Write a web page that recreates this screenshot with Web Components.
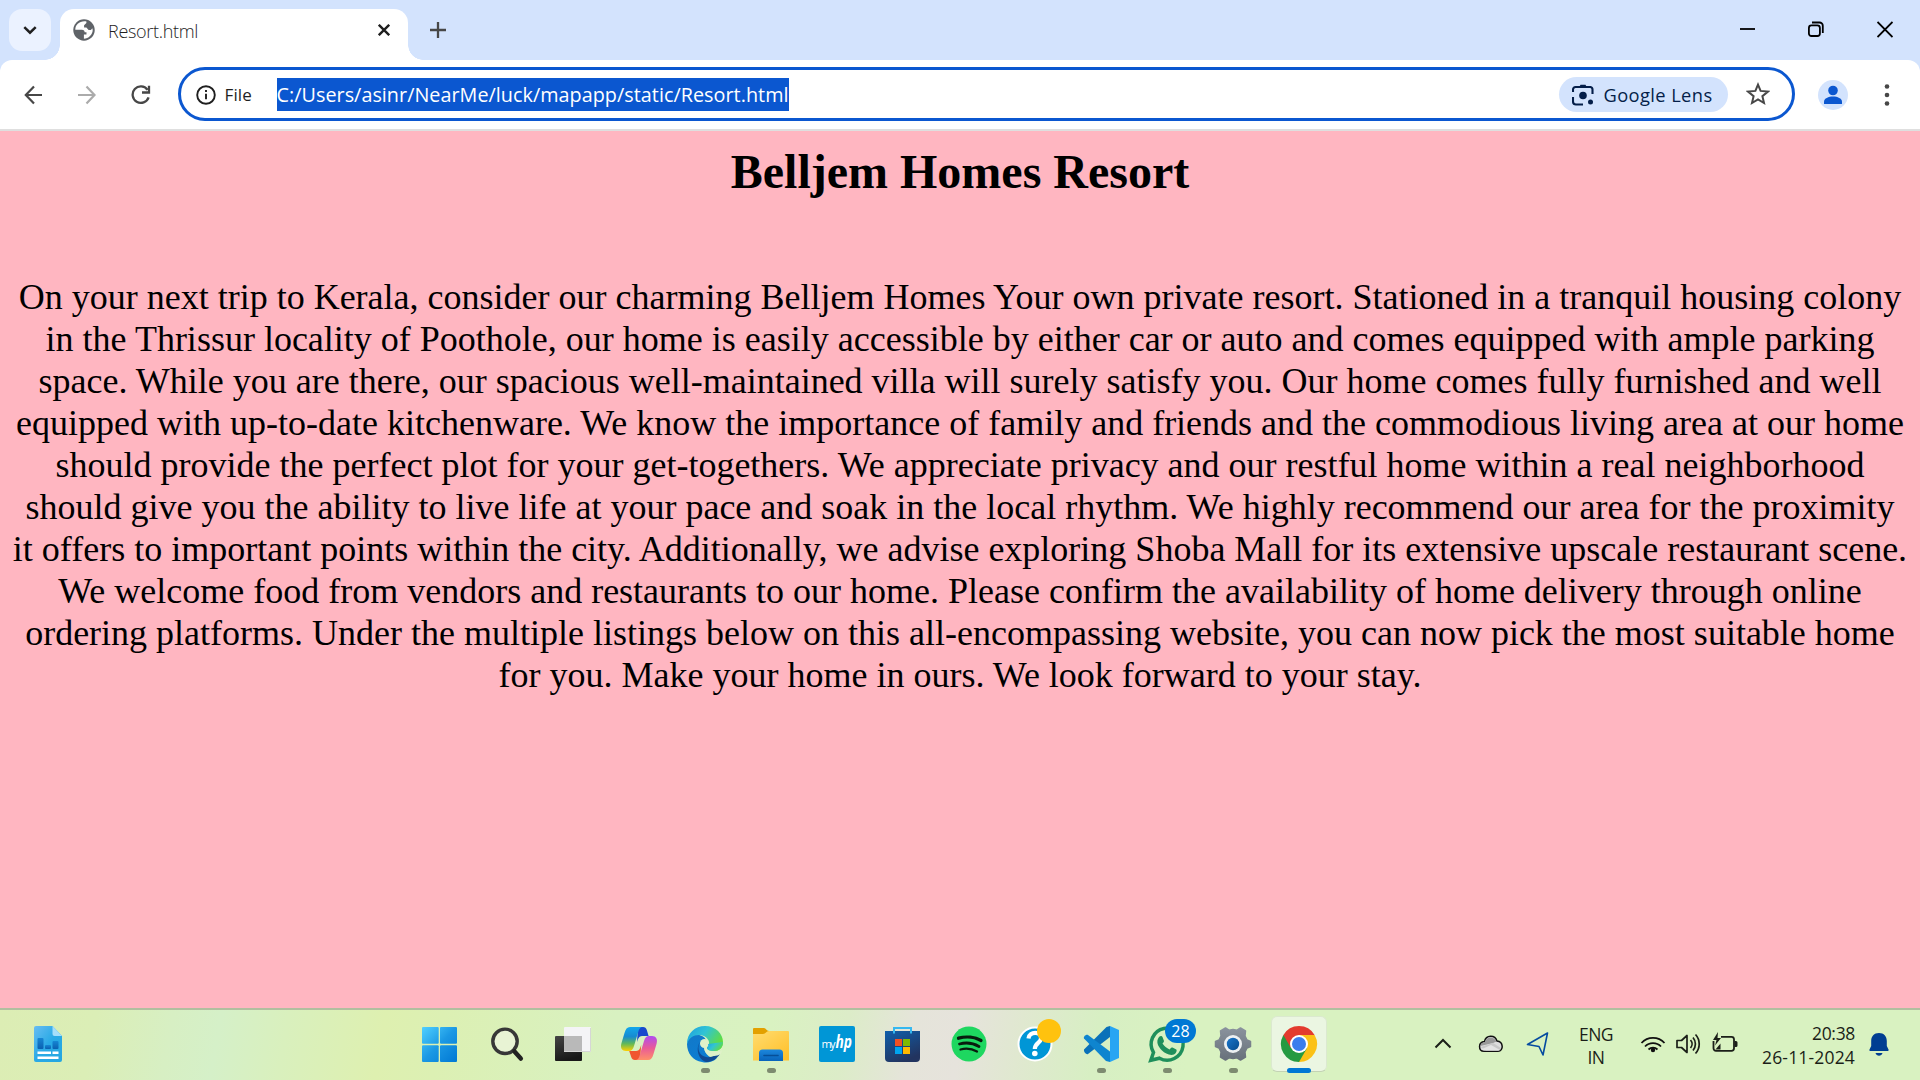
<!DOCTYPE html>
<html lang="en">
<head>
<meta charset="utf-8">
<title>Resort.html</title>
<style>
html,body{margin:0;height:100%;overflow:hidden}
body{font-family:"Open Sans","Noto Sans",sans-serif;color:#1f1f1f}
</style>
</head>
<body>
<desktop-shell></desktop-shell>
<script>
const define = (name, html, setup) => {
  const t = document.createElement('template');
  t.innerHTML = html;
  customElements.define(name, class extends HTMLElement {
    constructor() {
      super();
      this.attachShadow({mode: 'open'}).appendChild(t.content.cloneNode(true));
    }
    connectedCallback() { if (setup) setup(this); }
  });
};

/* Single-line label whose tracking is adjusted to fill the width in its "w" attribute */
define('fit-text', `<style>:host{display:block;white-space:nowrap}span{display:inline-block}</style><span><slot></slot></span>`, el => {
  const w = parseFloat(el.getAttribute('w'));
  const s = el.shadowRoot.querySelector('span');
  el.style.width = w + 'px';
  s.style.letterSpacing = '0px';
  const d = (w - s.getBoundingClientRect().width) / el.textContent.length;
  s.style.letterSpacing = d.toFixed(4) + 'px';
});

define('tab-strip', `<style>
:host{display:flex;height:60px;background:#d3e3fd;box-sizing:border-box;padding:9px 0 0 9px}
.search{width:42px;height:42px;border-radius:13px;background:#ebf2ff}
.foot{width:15px;height:15px;align-self:flex-end}
.l{margin-left:-6px;background:radial-gradient(circle at 0 0,#0000 14.5px,#fff 15px)}
.r{background:radial-gradient(circle at 100% 0,#0000 14.5px,#fff 15px)}
.tab{width:348px;height:51px;border-radius:14px 14px 0 0;background:#fff;display:flex}
.fav{margin:10px 0 0 13px}
fit-text{font-size:18px;font-weight:300;line-height:24px;margin:10px 0 0 13px}
svg{display:block;flex:none}
.win{margin:10px 27px 0 auto;display:flex;gap:53px}
</style>
<div class="search"><svg width="42" height="42" fill="none" stroke="#1f1f1f" stroke-width="2.5"><path d="M15.3 18.2 21 23.7l5.7-5.5"/></svg></div>
<div class="foot l"></div>
<div class="tab">
 <svg class="fav" width="22" height="22" viewBox="0 0 24 24"><path fill="#5f6368" d="M12 .3A11.7 11.7 0 1 0 12 23.7 11.7 11.7 0 0 0 12 .3z"/><path fill="#fff" d="M2.5 11.7h7.1c2.3.2 3.1 1.3 3.1 2.8h2v2.5h-2.8v4.5c5-.1 9.6-4.400 9.600-9.500l-.4-1.800-1.600 1.700h-2.500l-2.400-2.700h-2.500V6.800l2.500-2.500V2.600C7.500 1.600 2.500 5.800 2.500 11.700z"/></svg>
 <fit-text w="90">Resort.html</fit-text>
 <svg style="margin:15px 18px 0 auto" width="12" height="12" stroke="#1f1f1f" stroke-width="2.4"><path d="M.8.8 11.200 11.200M11.200.8.8 11.200"/></svg>
</div>
<div class="foot r"></div>
<svg style="margin:13px 0 0 7px" width="16" height="16" stroke="#474747" stroke-width="2.3"><path d="M8 0v16M0 8h16"/></svg>
<div class="win">
<svg width="15" height="22" stroke="#000" stroke-width="1.800"><path d="M0 10h15"/></svg>
<svg width="16" height="22" fill="none" stroke="#000" stroke-width="1.800"><rect x=".9" y="6.400" width="11" height="10.600" rx="2.500"/><path d="M4 3.500h7.500a3.300 3.300 0 0 1 3.300 3.300V14"/></svg>
<svg width="16" height="22" stroke="#000" stroke-width="1.800"><path d="M.5 3 15.500 18M15.500 3 .5 18"/></svg>
</div>`);

define('tool-bar', `<style>
:host{display:block;background:#d3e3fd}
.bar{height:69px;background:#fff;border-radius:12px 12px 0 0;border-bottom:2px solid #dfdfdf;display:flex;align-items:center;box-sizing:content-box}
svg{display:block;flex:none}
.omni{box-sizing:border-box;width:1617px;height:54px;border:3px solid #0b57d0;border-radius:27px;margin:0 0 1px 27px;display:flex;align-items:center;padding-left:14.500px}
.omni svg{margin-top:1px}
.file{font-size:17px;font-weight:500;margin-left:9px}
.sel{background:#0b57d0;color:#fff;height:33px;margin:1px 0 0 24.500px;font-size:19.800px;line-height:33px}
.chip{width:169px;height:35px;border-radius:18px;background:#d3e3fd;color:#041e49;margin:1px 0 0 auto;display:flex;align-items:center;box-sizing:border-box;padding-left:13px}
.chip fit-text{font-size:18.300px;margin-left:10px;font-weight:500;line-height:34px}
</style>
<div class="bar">
<svg style="margin-left:24px" width="20" height="20" fill="none" stroke="#474747" stroke-width="2.200"><path d="M18 10H2.500M10 1.500 1.800 10 10 18.500"/></svg>
<svg style="margin-left:33px" width="20" height="20" fill="none" stroke="#ababab" stroke-width="2.200"><path d="M1 10h15.500M9.500 1.500l8 8.500-8 8.500"/></svg>
<svg style="margin-left:34px" width="20" height="20" fill="none" stroke="#474747" stroke-width="2.300"><path d="M17.600 12.300A8.200 8.200 0 1 1 16.500 4.800M18 .7V7.500H11"/></svg>
<div class="omni">
<svg width="20" height="20" fill="none" stroke="#1f1f1f" stroke-width="1.900"><circle cx="10" cy="10" r="8.800"/><path d="M10 8.800v5.500M10 5v2"/></svg>
<fit-text class="file" w="27.500">File</fit-text>
<fit-text class="sel" w="512">C:/Users/asinr/NearMe/luck/mapapp/static/Resort.html</fit-text>
<div class="chip"><svg width="22" height="22" fill="none" stroke="#041e49" stroke-width="2.100"><path d="M1 8V5.500A2.500 2.500 0 0 1 3.500 3h15A2.500 2.500 0 0 1 20.500 5.500V10M1 13v4.500A3 3 0 0 0 4 20.500h7"/><path d="M7.500 2.500 8.500 0.800h5l1 1.700z" fill="#041e49" stroke="none"/><circle cx="11" cy="11.500" r="3.800" fill="#041e49" stroke="none"/><circle cx="18.500" cy="18" r="2.500" fill="#041e49" stroke="none"/></svg><fit-text w="109">Google Lens</fit-text></div>
<svg style="margin:0 22.500px 0 18px" width="24" height="24" viewBox="0 0 24 24" fill="none" stroke="#474747" stroke-width="2"><path d="M12 2.700 14.600 8.900 22 9.600 16.400 14.200 18 21 12 17.300 6 21 7.600 14.200 2 9.600 9.400 8.900z"/></svg>
</div>
<svg style="margin-left:23px" width="30" height="30"><circle cx="15" cy="15" r="15" fill="#d3e3fd"/><g fill="#0b57d0"><circle cx="15" cy="10.500" r="4.800"/><path d="M6 24v-2.500c0-3 4.500-5 9-5s9 2 9 5V24z"/></g></svg>
<svg style="margin-left:36px" width="6" height="24" fill="#474747"><circle cx="3" cy="3.500" r="2.300"/><circle cx="3" cy="12" r="2.300"/><circle cx="3" cy="20.500" r="2.300"/></svg>
</div>`);

define('resort-page', `<style>
:host{display:block;background:#ffb6c1;overflow:hidden;color:#000;font-family:"Liberation Serif",serif;text-align:center}
h1{font-size:48px;line-height:56px;margin:13px 0 0}
p{font-size:36px;line-height:42px;margin:76px 12px 0}
</style>
<h1>Belljem Homes Resort</h1>
<p>On your next trip to Kerala, consider our charming Belljem Homes Your own private resort. Stationed in a tranquil housing colony in the Thrissur locality of Poothole, our home is easily accessible by either car or auto and comes equipped with ample parking space. While you are there, our spacious well-maintained villa will surely satisfy you. Our home comes fully furnished and well equipped with up-to-date kitchenware. We know the importance of family and friends and the commodious living area at our home should provide the perfect plot for your get-togethers. We appreciate privacy and our restful home within a real neighborhood should give you the ability to live life at your pace and soak in the local rhythm. We highly recommend our area for the proximity it offers to important points within the city. Additionally, we advise exploring Shoba Mall for its extensive upscale restaurant scene. We welcome food from vendors and restaurants to our home. Please confirm the availability of home delivery through online ordering platforms. Under the multiple listings below on this all-encompassing website, you can now pick the most suitable home for you. Make your home in ours. We look forward to your stay.</p>`);

/* One taskbar slot: slotted icon, running marker, optional badge */
define('task-item', `<style>
:host{display:block;position:relative;width:66px;height:70px;flex:none}
::slotted(svg){display:block;position:relative}
.bg{display:none;position:absolute;left:7px;top:6px;width:54px;height:54px;border:1px solid #dbe9cf;border-bottom-color:#c3d3b4;border-radius:6px;background:#ebf6e2}
.mark{display:none;position:absolute;left:31px;top:58px;width:9px;height:5px;border-radius:3px;background:#7d8b70}
:host([running]) .mark{display:block}
:host([active]) .mark{display:block;left:23px;width:24px;background:#0078d4}
:host([active]) .bg{display:block}
::slotted(.badge){position:absolute;left:33px;top:9px;width:31px;height:24px;border-radius:12px;background:#0078d4;color:#fff;font-size:16px;line-height:24px;text-align:center}
</style><div class="bg"></div><slot></slot><div class="mark"></div>`);

define('task-bar', `<style>
:host{display:flex;box-sizing:border-box;height:72px;border-top:2px solid #b1bf9f;
background:linear-gradient(100deg,#dcedb4 0,#dbeeb6 5%,#d7efc3 9%,#d5f0c8 11.500%,#d9f0bd 15%,#def0b0 20%,#dcf0b3 23%,#d8f1c1 32%,#d9f2c1 40%,#dcecc8 44%,#e5e4da 47.500%,#e6e3dc 50%,#e0e8d0 53%,#d7efc3 57%,#d9f2c1 62%,#d9f2c1 100%)}
svg{display:block;flex:none}
.start{display:flex;margin-left:340px}
.tray{display:flex;align-items:center;margin-left:104px;color:#1b1f18}
.txt{font-size:17.500px;line-height:23px;display:flex;flex-direction:column;font-weight:400;padding-top:1px}
</style>
<svg style="margin-left:34px" width="32" height="70"><defs><linearGradient id="dg" x2="1" y2="1"><stop stop-color="#68bdf3"/><stop offset=".5" stop-color="#2aaae6"/><stop offset="1" stop-color="#24a6e0"/></linearGradient><linearGradient id="db" x2="0" y2="1"><stop stop-color="#1686d4"/><stop offset="1" stop-color="#0b60b0"/></linearGradient></defs><path fill="url(#dg)" d="M2 16h16.500L28 26v24a2 2 0 0 1-2 2H2a2 2 0 0 1-2-2V18a2 2 0 0 1 2-2z"/><path fill="#a5defa" d="M18.500 16 28 26h-7.500a2 2 0 0 1-2-2z"/><g fill="url(#db)"><rect x="3.500" y="28" width="6" height="11" rx="1"/><rect x="11" y="35" width="6" height="4" rx="1"/><rect x="18.500" y="31" width="6" height="8" rx="1"/></g><path stroke="#fff" stroke-width="2.500" d="M3.500 42.800H17M18.500 42.800h6M3.500 47.800h21"/></svg>
<div class="start">
<task-item><svg width="66" height="70"><defs><linearGradient id="w" gradientUnits="userSpaceOnUse" x1="16" y1="17" x2="51" y2="52"><stop stop-color="#50d0ff"/><stop offset=".5" stop-color="#1b98e4"/><stop offset="1" stop-color="#0078d4"/></linearGradient></defs><g fill="url(#w)"><rect x="16" y="17" width="16.700" height="16.700" rx="1"/><rect x="34" y="17" width="17" height="16.700" rx="1"/><rect x="16" y="35.300" width="16.700" height="16.700" rx="1"/><rect x="34" y="35.300" width="17" height="16.700" rx="1"/></g></svg></task-item>
<task-item><svg width="66" height="70"><circle cx="33" cy="31.300" r="12.200" fill="#e8f3d4" stroke="#373737" stroke-width="3.400"/><path stroke="#222" stroke-width="4.500" stroke-linecap="round" d="M42.500 41.500 48.800 48.500"/></svg></task-item>
<task-item><svg width="66" height="70"><defs><linearGradient id="tv" x2=".3" y2="1"><stop stop-color="#454545"/><stop offset="1" stop-color="#181818"/></linearGradient></defs><rect x="17" y="26" width="27" height="25" rx="1" fill="url(#tv)"/><rect x="26" y="17" width="27" height="25" rx="1" fill="#f4f4f6"/><path fill="#b9b9b9" d="M26 26h18v16H26z"/><path d="M26 41.500h26.500V18" fill="none" stroke="#d6d6d6"/></svg></task-item>
<task-item><svg width="66" height="70"><defs><linearGradient id="c1" x2="0" y2="1"><stop stop-color="#12a7ec"/><stop offset=".4" stop-color="#168bd0"/><stop offset=".7" stop-color="#62b958"/><stop offset="1" stop-color="#ffd000"/></linearGradient><linearGradient id="c2" x2="0" y2="1"><stop stop-color="#b04cf0"/><stop offset=".5" stop-color="#e95a98"/><stop offset="1" stop-color="#ff9068"/></linearGradient></defs><path fill="#1749cd" d="M34 17h5c2 0 3.200 1.200 3.800 3l1.800 6H38c-3 0-4 3-5 6z"/><path fill="#f05630" d="M36 50h-5c-2 0-3.200-1.200-3.800-3l-2-6h7c3 0 4-3 5-6z"/><path fill="url(#c1)" d="M26 17h13c-3 0-4 2-4.800 5L30 36c-1 3.500-2.500 5-5 5h-3c-4 0-6-3-4.500-8l3-10c1.200-4 2.500-6 5.500-6z"/><path fill="url(#c2)" d="M44 50H31c3 0 4-2 4.800-5L40 31c1-3.500 2.500-5 5-5h3c4 0 6 3 4.500 8l-3 10c-1.200 4-2.500 6-5.500 6z"/></svg></task-item>
<task-item running><svg width="66" height="70"><defs><linearGradient id="e1" x2="1" y2=".5"><stop stop-color="#1b9de2"/><stop offset=".5" stop-color="#31c4d4"/><stop offset="1" stop-color="#61dd3f"/></linearGradient><linearGradient id="e2" x2=".7" y2="1"><stop stop-color="#1278c8"/><stop offset="1" stop-color="#0c7ed4"/></linearGradient></defs><path fill="url(#e2)" d="M17 34c1-9 9-11 15-8 4 2 6 6 3 9-3 8 6 15 12 13-5 5-11 5-15 4-9-1-15-9-15-18z"/><path fill="#114a92" d="M30 32c-4 7 0 14 6 15 6 1 10-2 13-4 1-1 2 0 1 1-4 6-9 8-14 8-7-2-11-13-6-20z"/><path fill="url(#e1)" d="M17 34C17 23 25 16 35 16c11 0 18 8 18 16 0 6-4 9-9 9-4 0-7-1-7-3s2-2 2-5c0-4-4-8-10-8-6 0-10 3-12 9z"/><circle cx="34.500" cy="33.500" r="4.500" fill="#dff1c9"/><path fill="#dff1c9" d="M37 34c-2 4 1 8 8 8 4 0 6-1 7-2l-1 4c-7 4-17 2-17-7z"/><path fill="url(#e1)" d="M38 34c1 2-1 3-1 4 0 2 3 3 7 3 5 0 9-3 9-9z"/></svg></task-item>
<task-item running><svg width="66" height="70"><defs><linearGradient id="f1" x2=".8" y2="1"><stop stop-color="#ffdc70"/><stop offset="1" stop-color="#ffc12c"/></linearGradient><linearGradient id="f2" x2="0" y2="1"><stop stop-color="#1c87dc"/><stop offset="1" stop-color="#0864bb"/></linearGradient></defs><path fill="#e3a000" d="M17 19a1 1 0 0 1 1-1h10c2 0 2.500 3 5 3h1v4H17z"/><path fill="url(#f1)" d="M17 24h10c3 0 3-3 6-3h19a1 1 0 0 1 1 1v28.500H17z"/><path fill="url(#f2)" d="M23 51V43a3.500 3.500 0 0 1 3.500-3.500h17A3.500 3.500 0 0 1 47 43v8z"/><path stroke="#064f98" stroke-width="1.600" stroke-linecap="round" d="M28 45.500h14"/></svg></task-item>
<task-item><svg width="66" height="70"><rect x="17" y="16" width="36" height="36" rx="2" fill="#0096d6"/><text x="19.500" y="37.500" fill="#fff" font-family="Open Sans" font-size="11" textLength="14">my</text><text x="33.500" y="38" fill="#fff" font-family="Open Sans" font-size="17" font-weight="700" font-style="italic" textLength="16.500" lengthAdjust="spacingAndGlyphs">hp</text></svg></task-item>
<task-item><svg width="66" height="70"><defs><linearGradient id="s1" x2=".5" y2="1"><stop stop-color="#0f5fab"/><stop offset="1" stop-color="#22345f"/></linearGradient></defs><path fill="url(#s1)" d="M17 21h35v27a4 4 0 0 1-4 4H21a4 4 0 0 1-4-4z"/><path fill="none" stroke="#35b8f0" stroke-width="2" d="M26 23.500V18h17v5.500"/><path fill="#f25022" d="M27 29h7v7h-7z"/><path fill="#7fba00" d="M35 29h7v7h-7z"/><path fill="#00a4ef" d="M27 37h7v7h-7z"/><path fill="#ffb900" d="M35 37h7v7h-7z"/></svg></task-item>
<task-item><svg width="66" height="70"><circle cx="35" cy="34" r="17.500" fill="#1ed760"/><g fill="none" stroke="#081c0e" stroke-linecap="round"><path stroke-width="3.300" d="M24.500 28.200C32 26 41 27 47 30.500"/><path stroke-width="2.800" d="M25.500 34C32 32.200 39 33 45 36.500"/><path stroke-width="2.300" d="M26.500 39.500C32 38 38 38.700 43 41.500"/></g></svg></task-item>
<task-item><svg width="66" height="70"><circle cx="35" cy="34" r="16.500" fill="#0096d6" stroke="#fff" stroke-width="2"/><path fill="none" stroke="#fff" stroke-width="4.200" d="M28.500 28.500C29 21 42 21 41 28.500 40.500 33 34.800 33 34.800 39"/><circle cx="34.800" cy="43.500" r="2.800" fill="#fff"/><circle cx="49" cy="21" r="12" fill="#ffc20e"/></svg></task-item>
<task-item running><svg width="66" height="70"><path fill="#0a71b9" d="M18 39.500 40.500 17l3.500-1v11L22 44c-1.500 1-4.500-2-4-4.500z"/><path fill="#0f85cf" d="M18 28.500c-1-1.500 2-4.500 4-3.500l22 16.500V52l-4-1z"/><path fill="#27a5f3" d="M44 16 53 20v28l-9 4z"/></svg></task-item>
<task-item running><svg width="66" height="70"><path fill="none" stroke="#1f8f5b" stroke-width="3.500" d="M18.800 50.300 21.500 42.500A16 16 0 1 1 27.500 48.200z"/><path fill="#1f8f5b" d="M27 27c1-1 3-1.500 3.500 0l1.500 4c0 1-1 2-1.500 2.500 2 3 4 4.500 7 6 1-1 1.500-2.500 3-2l3.800 2c1 1-.3 4-2.300 5-4 1.500-9-1-12-4-4-4-6.500-9-3-13.500z"/></svg><div class="badge">28</div></task-item>
<task-item running><svg width="66" height="70"><defs><linearGradient id="g1" x2="0" y2="1"><stop stop-color="#8a929d"/><stop offset="1" stop-color="#68717b"/></linearGradient><linearGradient id="g2" x2="1" y2="1"><stop stop-color="#1976cc"/><stop offset="1" stop-color="#074b8d"/></linearGradient></defs><path fill="url(#g1)" stroke="url(#g1)" stroke-width="1.500" stroke-linejoin="round" d="M27.500 18 31 20.200 35 19.500 39 20.200 42.500 18 47.500 21 47 26 49 30 52.500 31.500V36.500L49 38 47 42 47.500 47 42.500 50 39 47.800 35 48.500 31 47.800 27.500 50 22.500 47 23 42 21 38 17.500 36.500V31.500L21 30 23 26 22.500 21z"/><circle cx="35" cy="34" r="9" fill="#edf0f2"/><circle cx="35" cy="34" r="6.200" fill="url(#g2)"/></svg></task-item>
<task-item active><svg width="66" height="70"><path fill="#e33b2e" d="M19.400 25A18 18 0 0 1 50.600 25L35 34z"/><path fill="#fbc116" d="M50.600 25A18 18 0 0 1 35 52L35 34 35 25z"/><path fill="#249a41" d="M19.400 25A18 18 0 0 0 35 52L42.800 38.500 35 34z"/><path fill="#e33b2e" d="M19.400 25 27.200 38.500 35 25z"/><circle cx="35" cy="34" r="9" fill="#fff"/><circle cx="35" cy="34" r="7" fill="#3b7ded"/></svg></task-item>
</div>
<div class="tray">
<svg width="18" height="70" fill="none" stroke="#1b1f18" stroke-width="2"><path d="M1.500 37.500 9 30l7.500 7.500"/></svg>
<svg style="margin-left:26px" width="26" height="70"><path fill="#ddd" stroke="#111" stroke-width="1.500" d="M6 41.300C0 41 0 32 6.500 31.500 8 24.500 17 24.500 19 31 25.500 31.500 26 41 20 41.300z"/><path fill="#999" d="M2.500 36C3 33 5 32 7 32c1-6 9-6 11.500-.5L15 33z"/><path fill="#c8c8c8" d="M2.500 37 15 33l8 5c-1 2-1.500 2.500-3 2.500H8z"/><path fill="#e4e4e4" d="M3 39.500 13 35l9 5-2 .6H6z"/></svg>
<svg style="margin-left:22px" width="24" height="70" fill="none" stroke="#054ba0" stroke-width="1.600" stroke-linejoin="round"><path d="M21.500 23 1.500 34.500 13 36.500l4 8.500z"/></svg>
<div class="txt" style="margin-left:29px;align-items:center"><fit-text w="34">ENG</fit-text><fit-text w="17">IN</fit-text></div>
<svg style="margin-left:27px" width="26" height="70" fill="none" stroke="#111" stroke-width="1.800"><path d="M1.500 33a15.500 15.500 0 0 1 23 0M5 36.500a11 11 0 0 1 16 0M8.500 39.500a6.500 6.500 0 0 1 9 0"/><circle cx="13" cy="40" r="2.200" fill="#111" stroke="none"/></svg>
<svg style="margin-left:10px" width="26" height="70" fill="none" stroke="#1b1f18" stroke-width="1.700" stroke-linejoin="round"><path d="M1 30.500h4.500l5.500-5v17l-5.500-5H1z"/><path d="M14.500 30a6 6 0 0 1 0 8M17 27.500a10 10 0 0 1 0 13M19.500 24.500a14 14 0 0 1 0 19"/></svg>
<svg style="margin-left:10px" width="26" height="70" fill="none" stroke="#1b1f18" stroke-width="1.800"><path d="M9 26.800h10.500a2.500 2.500 0 0 1 2.500 2.500v9a2.500 2.500 0 0 1-2.500 2.500H4A2.500 2.500 0 0 1 1.500 38.300V31"/><path stroke="none" fill="#1b1f18" d="M22.500 31h1.500a1.500 1.500 0 0 1 1.500 1.500v3A1.500 1.500 0 0 1 24 37h-1.500zM6 22 1 30h3.500L3 35.500 9 28H5.500zM3.500 39.500l5-6v6z"/></svg>
<div class="txt" style="margin-left:24px;align-items:flex-end;line-height:24px;padding:0"><fit-text w="43">20:38</fit-text><fit-text w="93">26-11-2024</fit-text></div>
<svg style="margin-left:13px" width="22" height="70" fill="#003e92"><path d="M11 23c5 0 7.800 3.500 7.800 8v5l1.700 3.500c.300.800 0 1.500-1 1.500h-17c-1 0-1.300-.700-1-1.500L3.200 36v-5c0-4.500 2.800-8 7.800-8zM7.500 43h7c-1 3.500-6 3.500-7 0z"/></svg>
</div>`);

define('desktop-shell', `<style>
:host{display:flex;flex-direction:column;width:1920px;height:1080px}
resort-page{flex:1}
tab-strip,tool-bar,task-bar{flex:none}
</style><tab-strip></tab-strip><tool-bar></tool-bar><resort-page></resort-page><task-bar></task-bar>`);
</script>
</body>
</html>
